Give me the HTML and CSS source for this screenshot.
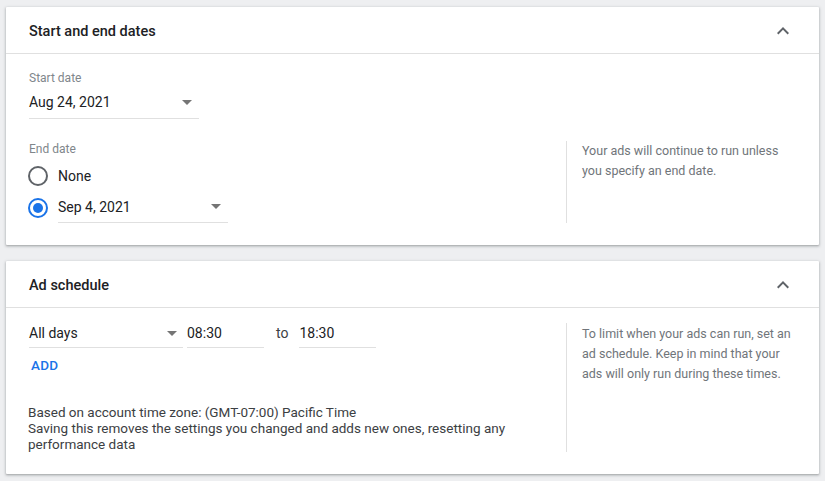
FILE: index.html
```html
<!DOCTYPE html>
<html>
<head>
<meta charset="utf-8">
<link rel="stylesheet" href="styles.css">
</head>
<body>
<div class="page">
  <section class="card">
    <header class="card-head">
      <h2 class="card-title">Start and end dates</h2>
      <svg class="chev" viewBox="0 0 24 24" width="24" height="24"><path d="M12 8l-6 6 1.41 1.41L12 10.83l4.59 4.58L18 14z"/></svg>
    </header>
    <div class="card-body dates-body">
      <div class="field-label start-label">Start date</div>
      <div class="dropdown start-dd">
        <span class="dd-value">Aug 24, 2021</span>
        <svg class="dd-arrow" viewBox="0 0 24 24" width="24" height="24"><path d="M7 10l5 5 5-5z"/></svg>
      </div>
      <div class="split end-row">
        <div class="main-col">
          <div class="field-label end-label">End date</div>
          <div class="radio-row first">
            <span class="radio"></span>
            <span class="radio-text">None</span>
          </div>
          <div class="radio-row second">
            <span class="radio checked"><span class="dot"></span></span>
            <div class="dropdown end-dd">
              <span class="dd-value">Sep 4, 2021</span>
              <svg class="dd-arrow" viewBox="0 0 24 24" width="24" height="24"><path d="M7 10l5 5 5-5z"/></svg>
            </div>
          </div>
        </div>
        <aside class="help">Your ads will continue to run unless you specify an end date.</aside>
      </div>
    </div>
  </section>

  <section class="card">
    <header class="card-head">
      <h2 class="card-title">Ad schedule</h2>
      <svg class="chev" viewBox="0 0 24 24" width="24" height="24"><path d="M12 8l-6 6 1.41 1.41L12 10.83l4.59 4.58L18 14z"/></svg>
    </header>
    <div class="card-body split sched-body">
      <div class="main-col">
        <div class="sched-row">
          <div class="dropdown days-dd">
            <span class="dd-value">All days</span>
            <svg class="dd-arrow" viewBox="0 0 24 24" width="24" height="24"><path d="M7 10l5 5 5-5z"/></svg>
          </div>
          <div class="time first-time">08:30</div>
          <span class="to">to</span>
          <div class="time">18:30</div>
        </div>
        <div class="add">ADD</div>
        <p class="note">Based on account time zone: (GMT-07:00) Pacific Time<br>Saving this removes the settings you changed and adds new ones, resetting any performance data</p>
      </div>
      <aside class="help sched-help">To limit when your ads can run, set an ad schedule. Keep in mind that your ads will only run during these times.</aside>
    </div>
  </section>
</div>
</body>
</html>
```
FILE: styles.css
```css
* { box-sizing: border-box; }
html, body { margin: 0; padding: 0; }
body {
  background: #eeeff1;
  font-family: Roboto, "Liberation Sans", Arial, sans-serif;
  color: #202124;
  width: 825px;
  height: 481px;
  overflow: hidden;
}
.page {
  padding: 7px 6px 0 6px;
  display: flex;
  flex-direction: column;
  gap: 16px;
}
.card {
  background: #fff;
  width: 813px;
  box-shadow: 0 1px 2px rgba(60,64,67,.3), 0 1px 3px 1px rgba(60,64,67,.15);
  border-radius: 1px;
}
.card-head {
  height: 47px;
  border-bottom: 1px solid #e0e0e0;
  display: flex;
  align-items: center;
  justify-content: space-between;
  padding: 0 24px 0 23px;
}
.card-title {
  margin: 0;
  font-size: 14.5px;
  font-weight: 500;
  line-height: 20px;
  color: #202124;
  padding-top: 3px;
}
.chev { fill: #5f6368; display: block; margin-top: 2px; }
.card-body { padding: 17px 24px 14px 23px; }
.split { display: flex; }
.main-col { flex: 1; }
.help {
  width: 229px;
  border-left: 1px solid #e0e0e0;
  padding-left: 15px;
  font-size: 12.5px;
  line-height: 20px;
  color: #70757a;
}
.sched-help { padding-top: 1px; }
.field-label {
  font-size: 12px;
  line-height: 14px;
  color: #80868b;
}
.end-label { line-height: 16px; margin-bottom: 5px; }
.dropdown {
  position: relative;
  display: flex;
  align-items: center;
  border-bottom: 1px solid #e0e0e0;
  font-size: 14px;
  line-height: 20px;
}
.dd-arrow {
  position: absolute;
  right: 0;
  top: 50%;
  margin-top: -13px;
  fill: #757575;
}
.start-dd { width: 170px; margin-top: 2px; padding: 5px 0 6px; }
.end-row { margin-top: 22px; padding-bottom: 8px; }
.radio-row { display: flex; align-items: center; }
.radio-row.first { height: 28px; }
.radio-row.second { margin-top: 3px; }
.radio {
  width: 20px;
  height: 20px;
  border: 2px solid #5f6368;
  border-radius: 50%;
  margin-left: -1px;
  margin-right: 10px;
  display: flex;
  align-items: center;
  justify-content: center;
  flex: none;
}
.radio.checked { border-color: #1a73e8; }
.dot { width: 10px; height: 10px; border-radius: 50%; background: #1a73e8; }
.radio-text { font-size: 14px; line-height: 20px; }
.end-dd { width: 170px; padding: 5px 0 5px; margin-top: -1px; }
.sched-body { padding: 15px 24px 22px 23px; }
.sched-row { display: flex; align-items: flex-start; }
.days-dd { width: 154px; padding: 0 0 4px; }
.days-dd .dd-arrow { right: -1px; margin-top: -14px; }
.time {
  width: 77px;
  font-size: 14px;
  line-height: 20px;
  padding-bottom: 4px;
  border-bottom: 1px solid #e0e0e0;
}
.first-time { margin-left: 4px; }
.to { font-size: 14px; line-height: 20px; margin: 0 11px 0 12px; color: #3c4043; }
.add {
  margin-top: 9px;
  margin-left: 2px;
  font-size: 13.5px;
  font-weight: 500;
  line-height: 16px;
  color: #1a73e8;
  letter-spacing: .3px;
}
.note {
  margin: 31px 0 0;
  max-width: 500px;
  font-size: 13.5px;
  line-height: 16px;
  color: #3c4043;
  margin-left: -1px;
}
```
